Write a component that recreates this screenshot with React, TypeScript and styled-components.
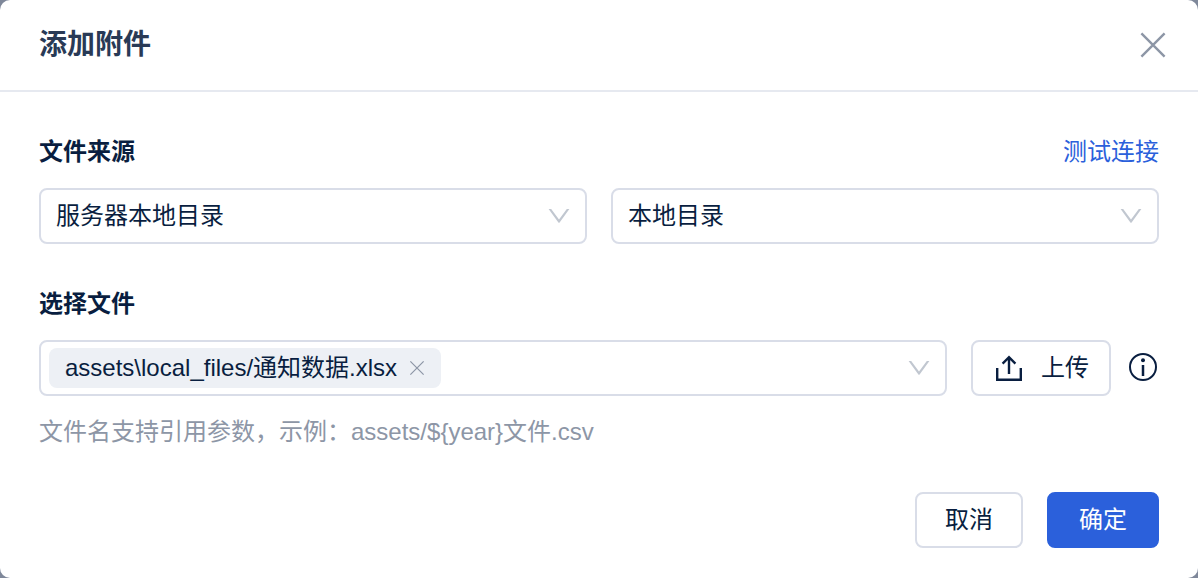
import React, { useState } from "react";
import styled, { createGlobalStyle } from "styled-components";

const color = {
  ink: "#091e40",
  title: "#293a56",
  muted: "#8d96a6",
  border: "#d9dde8",
  divider: "#e6e9f0",
  chevron: "#c1c7d0",
  primary: "#2b60db",
};

const GlobalStyle = createGlobalStyle`
  *, *::before, *::after { box-sizing: border-box; }
  body {
    margin: 0;
    background: #7f889a;
    color: ${color.ink};
    font: 24px/32px "Liberation Sans", "Noto Sans CJK SC", sans-serif;
  }
  button, input, select { font: inherit; color: inherit; }
  svg { display: block; flex: none; }
`;

const Dialog = styled.form`
  display: flex;
  flex-direction: column;
  min-height: 100vh;
  background: #fff;
  border-radius: 10px;
`;

const Header = styled.header`
  display: flex;
  align-items: center;
  justify-content: space-between;
  padding: 25px 31px 25px 39px;
  border-bottom: 2px solid ${color.divider};
`;

const Title = styled.h1`
  margin: 0;
  color: ${color.title};
  font-size: 28px;
  line-height: 40px;
  font-weight: 700;
`;

const IconButton = styled.button<{ $tone?: string }>`
  display: flex;
  padding: 0;
  border: 0;
  background: none;
  color: ${(p) => p.$tone ?? color.ink};
  cursor: pointer;
`;

const Body = styled.div`
  display: flex;
  flex-direction: column;
  gap: 44px;
  padding: 44px 39px;
`;

const Field = styled.section`
  display: flex;
  flex-direction: column;
`;

const FieldHead = styled.div`
  display: flex;
  justify-content: space-between;
  margin-bottom: 20px;
`;

const Label = styled.label`
  font-weight: 700;
`;

const TextLink = styled.a`
  color: ${color.primary};
  text-decoration: none;
`;

const SelectRow = styled.div`
  display: grid;
  grid-template-columns: 1fr 1fr;
  gap: 24px;
`;

const SelectBox = styled.div`
  display: grid;
  align-items: center;

  > * { grid-area: 1 / 1; }
  > svg {
    justify-self: end;
    margin-right: 17px;
    pointer-events: none;
  }
`;

const Select = styled.select`
  appearance: none;
  width: 100%;
  height: 56px;
  padding: 0 48px 0 15px;
  border: 2px solid ${color.border};
  border-radius: 8px;
  background: #fff;
`;

const FileRow = styled.div`
  display: flex;
  align-items: center;
`;

const FilePicker = styled.div`
  display: flex;
  flex: 1;
  align-items: center;
  min-width: 0;
  height: 56px;
  margin-right: 24px;
  padding: 0 15px 0 8px;
  border: 2px solid ${color.border};
  border-radius: 8px;
`;

const Tag = styled.span`
  display: flex;
  align-items: center;
  gap: 12px;
  height: 40px;
  padding: 0 16px;
  border-radius: 8px;
  background: #edf0f5;
  white-space: nowrap;
`;

const FileInput = styled.input`
  flex: 1;
  min-width: 0;
  border: 0;
  outline: 0;
  background: none;
`;

const Button = styled.button<{ $primary?: boolean }>`
  display: flex;
  align-items: center;
  justify-content: center;
  gap: 16px;
  height: 56px;
  padding: 0 ${(p) => (p.$primary ? 30 : 28)}px;
  border: 2px solid ${(p) => (p.$primary ? color.primary : color.border)};
  border-radius: 8px;
  background: ${(p) => (p.$primary ? color.primary : "#fff")};
  color: ${(p) => (p.$primary ? "#fff" : color.ink)};
  cursor: pointer;
`;

const UploadButton = styled(Button)`
  margin-right: 16px;
  padding: 0 20px;
`;

const Hint = styled.p`
  margin: 20px 0 0;
  color: ${color.muted};
`;

const Footer = styled.footer`
  display: flex;
  justify-content: flex-end;
  gap: 24px;
  padding: 0 39px 30px;
`;

const Cross = ({ size, stroke }: { size: number; stroke: number }) => (
  <svg width={size} height={size} viewBox="0 0 28 28" fill="none" stroke="currentColor" strokeWidth={stroke} aria-hidden="true">
    <path d="M2.4 2.4 25.6 25.6M25.6 2.4 2.4 25.6" />
  </svg>
);

const Chevron = () => (
  <svg width="22" height="16" viewBox="0 0 22 16" aria-hidden="true">
    <path d="M.6 1H3.2L11 11.6 18.8 1H21.4L11.8 14.3Q11 15.3 10.2 14.3Z" fill={color.chevron} />
  </svg>
);

const UploadIcon = () => (
  <svg width="32" height="32" viewBox="0 0 32 32" fill="none" stroke="currentColor" strokeWidth="2.4" aria-hidden="true">
    <path d="M4.2 16V27.8H27.8V16M16 22V5.5M9.6 11.6 16 5.2 22.4 11.6" />
  </svg>
);

const InfoIcon = () => (
  <svg width="32" height="32" viewBox="0 0 32 32" fill="none" stroke="currentColor" aria-hidden="true">
    <circle cx="16" cy="15" r="13" strokeWidth="2" />
    <path d="M16 13V24" strokeWidth="2.5" />
    <circle cx="16" cy="8.2" r="2" fill="currentColor" stroke="none" />
  </svg>
);

export default function App() {
  const [file, setFile] = useState<string | null>("assets\\local_files/通知数据.xlsx");

  return (
    <>
      <GlobalStyle />
      <Dialog role="dialog" aria-labelledby="dialog-title" onSubmit={(e) => e.preventDefault()}>
        <Header>
          <Title id="dialog-title">添加附件</Title>
          <IconButton type="button" aria-label="关闭" $tone={color.muted}>
            <Cross size={28} stroke={2.4} />
          </IconButton>
        </Header>
        <Body>
          <Field>
            <FieldHead>
              <Label htmlFor="source">文件来源</Label>
              <TextLink href="#test">测试连接</TextLink>
            </FieldHead>
            <SelectRow>
              <SelectBox>
                <Select id="source">
                  <option>服务器本地目录</option>
                </Select>
                <Chevron />
              </SelectBox>
              <SelectBox>
                <Select aria-label="目录">
                  <option>本地目录</option>
                </Select>
                <Chevron />
              </SelectBox>
            </SelectRow>
          </Field>
          <Field>
            <FieldHead>
              <Label htmlFor="file">选择文件</Label>
            </FieldHead>
            <FileRow>
              <FilePicker>
                {file && (
                  <Tag>
                    {file}
                    <IconButton type="button" aria-label="移除" $tone={color.muted} onClick={() => setFile(null)}>
                      <Cross size={16} stroke={2.2} />
                    </IconButton>
                  </Tag>
                )}
                <FileInput id="file" />
                <Chevron />
              </FilePicker>
              <UploadButton type="button">
                <UploadIcon />
                上传
              </UploadButton>
              <IconButton type="button" aria-label="说明">
                <InfoIcon />
              </IconButton>
            </FileRow>
            <Hint>文件名支持引用参数，示例：assets/${"{year}"}文件.csv</Hint>
          </Field>
        </Body>
        <Footer>
          <Button type="button">取消</Button>
          <Button type="submit" $primary>
            确定
          </Button>
        </Footer>
      </Dialog>
    </>
  );
}
